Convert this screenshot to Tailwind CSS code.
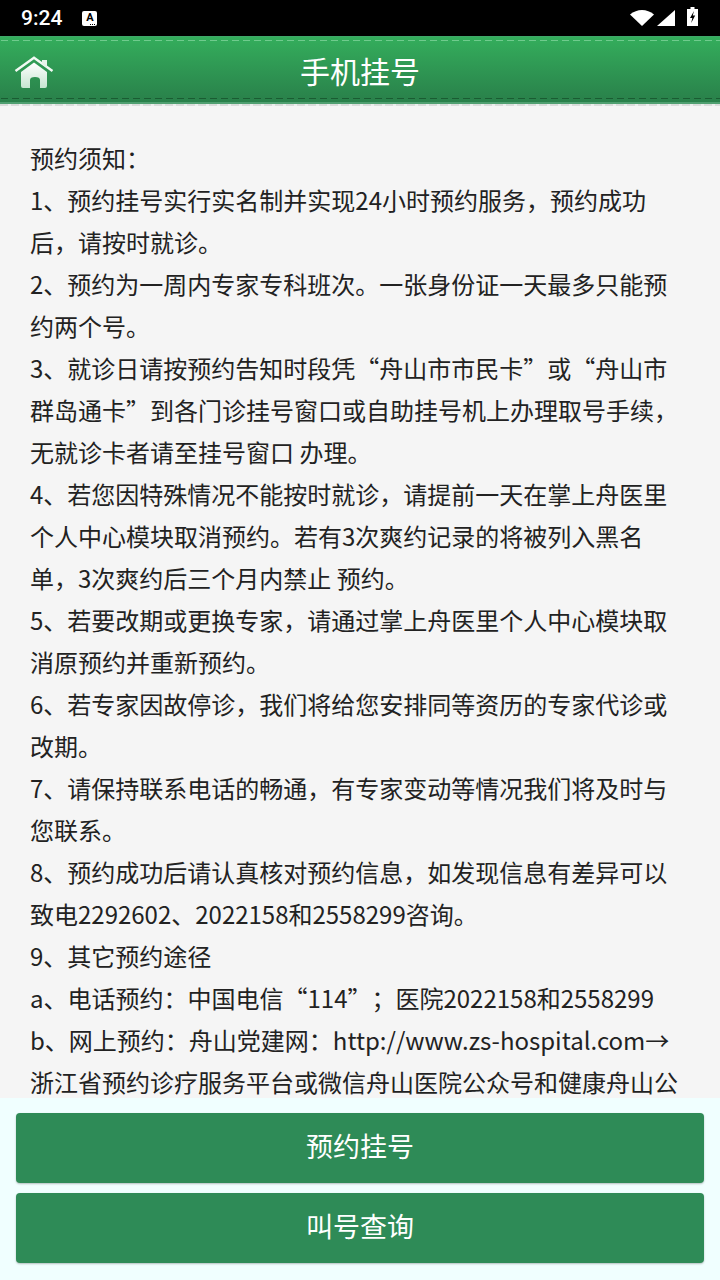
<!DOCTYPE html>
<html lang="zh-CN">
<head>
<meta charset="utf-8">
<script src="https://cdn.jsdelivr.net/npm/@tailwindcss/browser@4"></script>
</head>
<body class="m-0 bg-[#f5f5f5]">
<div class="w-[720px] h-[1280px] flex flex-col overflow-hidden font-['Noto_Sans_CJK_SC','Noto_Sans',sans-serif]">
  <div class="h-[36px] shrink-0 bg-black text-white flex items-center pl-[21px] pr-[22px]">
    <span class="text-[21px] font-medium font-['Roboto',sans-serif] leading-none">9:24</span>
    <span class="ml-[20px] w-[15px] h-[15px] bg-white rounded-[2px] flex items-start justify-center text-black text-[11px] font-bold leading-[13px] font-['Roboto',sans-serif] relative">A<span class="absolute right-[1px] bottom-[1px] w-[6px] h-[1px] bg-[repeating-linear-gradient(90deg,#000_0,#000_1px,transparent_1px,transparent_2px)]"></span></span>
    <div class="ml-auto flex items-center">
      <svg width="24" height="16" viewBox="0 0 24 16"><path d="M0 4.500C7 -1.500 17 -1.500 24 4.500L12 16Z" fill="#fff"/></svg>
      <svg width="18" height="16" viewBox="0 0 18 16" class="ml-[3px]"><path d="M18 0V16H0Z" fill="#fff"/></svg>
      <svg width="11" height="19" viewBox="0 0 11 19" class="ml-[12px] mb-[3px]"><path d="M3.500 0H7.500V2H11V19H0V2H3.500Z" fill="#fff"/><path d="M7 4L3 11H5.300L4.200 16L8.200 8.500H5.800Z" fill="#000"/></svg>
    </div>
  </div>
  <div class="h-[68px] shrink-0 relative flex items-center justify-center bg-gradient-to-b from-[#34ae5c] to-[#29804a] border-t border-b-2 border-t-[#3fa868] border-b-[#4f9f70]">
    <div class="absolute left-0 right-0 top-[3px] h-[1px] bg-[repeating-linear-gradient(90deg,transparent_0,transparent_1px,#6fcb8d_1px,#6fcb8d_8px,transparent_8px,transparent_11px)]"></div>
    <div class="absolute left-0 right-0 bottom-[3px] h-[1px] bg-[repeating-linear-gradient(90deg,transparent_0,transparent_1px,#1a5c32_1px,#1a5c32_8px,transparent_8px,transparent_11px)]"></div>
    <svg class="absolute left-[14px] top-[19px]" width="40" height="34" viewBox="0 0 40 34">
      <defs><linearGradient id="h" x1="0" y1="0" x2="0" y2="1"><stop offset="0" stop-color="#ffffff"/><stop offset="1" stop-color="#c5e5d0"/></linearGradient></defs>
      <path d="M1.500 15L20 1.800L38.500 15" fill="none" stroke="#f2faf4" stroke-width="2.400"/>
      <path d="M28 4H33V12L28 8Z" fill="#e6f4ea"/>
      <path d="M20 6.500L33 16V30Q33 32 31 32H26V24Q26 21 21 21Q16 21 16 24V32H9Q7 32 7 30V16Z" fill="url(#h)"/>
    </svg>
    <span class="text-[30px] text-white leading-none">手机挂号</span>
  </div>
  <div class="relative flex-1 min-h-0 overflow-hidden bg-[#f5f5f5] pt-[33px] px-[30px] text-[24px] leading-[42px] text-[#222] whitespace-nowrap">
    <div class="absolute left-0 right-0 top-0 h-[2px] bg-[repeating-linear-gradient(90deg,#d9dcda_0,#d9dcda_8px,#eceeed_8px,#eceeed_11px)]"></div>
    <p>预约须知：</p>
    <p>1、预约挂号实行实名制并实现24小时预约服务，预约成功<br>后，请按时就诊。</p>
    <p>2、预约为一周内专家专科班次。一张身份证一天最多只能预<br>约两个号。</p>
    <p>3、就诊日请按预约告知时段凭“舟山市市民卡”或“舟山市<br>群岛通卡”到各门诊挂号窗口或自助挂号机上办理取号手续，<br>无就诊卡者请至挂号窗口 办理。</p>
    <p>4、若您因特殊情况不能按时就诊，请提前一天在掌上舟医里<br>个人中心模块取消预约。若有3次爽约记录的将被列入黑名<br>单，3次爽约后三个月内禁止 预约。</p>
    <p>5、若要改期或更换专家，请通过掌上舟医里个人中心模块取<br>消原预约并重新预约。</p>
    <p>6、若专家因故停诊，我们将给您安排同等资历的专家代诊或<br>改期。</p>
    <p>7、请保持联系电话的畅通，有专家变动等情况我们将及时与<br>您联系。</p>
    <p>8、预约成功后请认真核对预约信息，如发现信息有差异可以<br>致电2292602、2022158和2558299咨询。</p>
    <p>9、其它预约途径</p>
    <p class="[text-spacing-trim:space-all]">a、电话预约：中国电信“114”；医院2022158和2558299</p>
    <p>b、网上预约：舟山党建网：http://www.zs-hospital.com→<br>浙江省预约诊疗服务平台或微信舟山医院公众号和健康舟山公</p>
  </div>
  <div class="h-[182px] shrink-0 bg-[#f0ffff] px-[16px] pt-[15px] flex flex-col gap-[10px]">
    <button class="h-[70px] pb-[3px] rounded-[4px] bg-[#2e8b57] text-white text-[27px] shadow-[0_1px_2px_rgba(0,0,0,0.25)]">预约挂号</button>
    <button class="h-[70px] pb-[3px] rounded-[4px] bg-[#2e8b57] text-white text-[27px] shadow-[0_1px_2px_rgba(0,0,0,0.25)]">叫号查询</button>
  </div>
</div>
</body>
</html>
